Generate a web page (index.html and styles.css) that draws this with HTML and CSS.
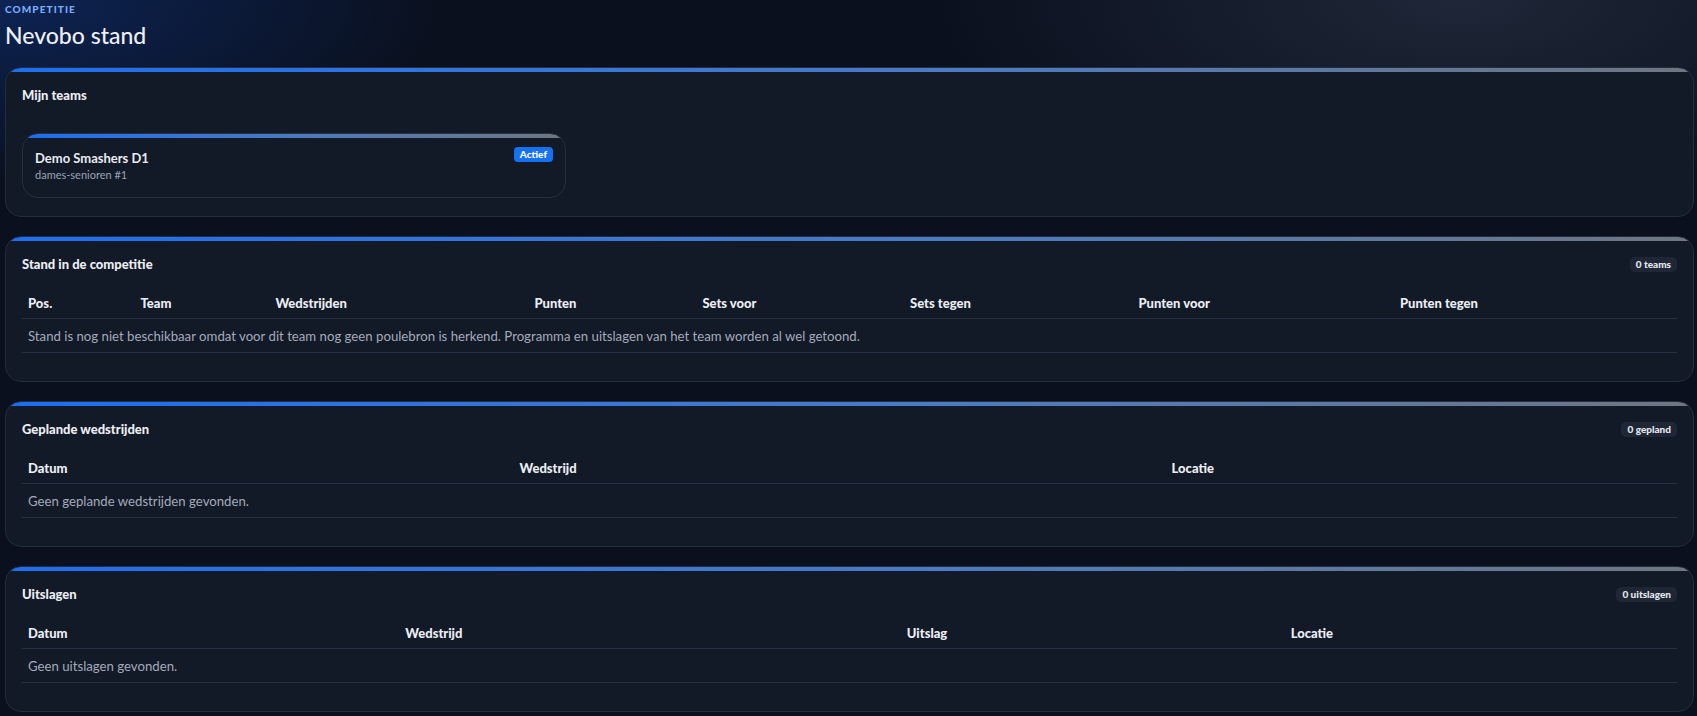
FILE: index.html
```html
<!DOCTYPE html>
<html lang="nl">
<head>
<meta charset="utf-8">
<title>Nevobo stand</title>
<link rel="stylesheet" href="styles.css">
</head>
<body>
<main class="page">
  <header class="page-head">
    <div class="eyebrow">COMPETITIE</div>
    <h1 class="page-title">Nevobo stand</h1>
  </header>

  <section class="card">
    <div class="card-head">
      <h2 class="card-title">Mijn teams</h2>
    </div>
    <div class="teams">
      <div class="team">
        <div class="team-row">
          <div class="team-name">Demo Smashers D1</div>
          <span class="pill pill-active">Actief</span>
        </div>
        <div class="team-sub">dames-senioren #1</div>
      </div>
    </div>
  </section>

  <section class="card">
    <div class="card-head">
      <h2 class="card-title">Stand in de competitie</h2>
      <span class="pill pill-count">0 teams</span>
    </div>
    <div class="table-wrap">
      <table class="grid">
        <colgroup>
          <col class="c-pos"><col class="c-team"><col class="c-played"><col class="c-points">
          <col class="c-sets-for"><col class="c-sets-against"><col class="c-pts-for"><col class="c-pts-against">
        </colgroup>
        <thead>
          <tr><th>Pos.</th><th>Team</th><th>Wedstrijden</th><th>Punten</th><th>Sets voor</th><th>Sets tegen</th><th>Punten voor</th><th>Punten tegen</th></tr>
        </thead>
        <tbody>
          <tr><td colspan="8" class="empty">Stand is nog niet beschikbaar omdat voor dit team nog geen poulebron is herkend. Programma en uitslagen van het team worden al wel getoond.</td></tr>
        </tbody>
      </table>
    </div>
  </section>

  <section class="card">
    <div class="card-head">
      <h2 class="card-title">Geplande wedstrijden</h2>
      <span class="pill pill-count">0 gepland</span>
    </div>
    <div class="table-wrap">
      <table class="grid">
        <colgroup>
          <col class="c-p-date"><col class="c-p-match"><col class="c-p-loc">
        </colgroup>
        <thead>
          <tr><th>Datum</th><th>Wedstrijd</th><th>Locatie</th></tr>
        </thead>
        <tbody>
          <tr><td colspan="3" class="empty">Geen geplande wedstrijden gevonden.</td></tr>
        </tbody>
      </table>
    </div>
  </section>

  <section class="card">
    <div class="card-head">
      <h2 class="card-title">Uitslagen</h2>
      <span class="pill pill-count">0 uitslagen</span>
    </div>
    <div class="table-wrap">
      <table class="grid">
        <colgroup>
          <col class="c-r-date"><col class="c-r-match"><col class="c-r-score"><col class="c-r-loc">
        </colgroup>
        <thead>
          <tr><th>Datum</th><th>Wedstrijd</th><th>Uitslag</th><th>Locatie</th></tr>
        </thead>
        <tbody>
          <tr><td colspan="4" class="empty">Geen uitslagen gevonden.</td></tr>
        </tbody>
      </table>
    </div>
  </section>
</main>
</body>
</html>
```

FILE: styles.css
```css
* { box-sizing: border-box; }

html, body {
  margin: 0;
  height: 100%;
}

body {
  font-family: Lato, "Noto Sans", "Liberation Sans", sans-serif;
  color: #e6e9ef;
  background:
    radial-gradient(ellipse 640px 260px at 0 0, rgba(16, 60, 150, 0.45), rgba(16, 60, 150, 0) 70%),
    radial-gradient(ellipse 760px 300px at 1460px 0, rgba(70, 82, 104, 0.35), rgba(70, 82, 104, 0) 70%),
    #0a101e;
  overflow: hidden;
}

.page {
  display: flex;
  flex-direction: column;
  gap: 19px;
  padding: 3px 3px 0 5px;
}

/* page heading */
.page-head {
  display: flex;
  flex-direction: column;
  margin-bottom: -1px;
}

.eyebrow {
  font-size: 10px;
  line-height: 12px;
  font-weight: 900;
  letter-spacing: 1.1px;
  color: #79adff;
}

.page-title {
  margin: 6px 0 0;
  font-size: 23px;
  line-height: 28px;
  font-weight: 500;
  color: #eef0f5;
}

/* cards with a gradient strip along the top */
.card {
  border: 1px solid #232d3e;
  border-radius: 16px;
  background:
    linear-gradient(90deg, #1c6ef2 0%, #4a7bc4 55%, #6f7681 100%) top left / 100% 4px no-repeat,
    #121927;
  padding: 17px 16px 18px;
}

.card-head {
  display: flex;
  align-items: center;
  justify-content: space-between;
  min-height: 20px;
}

.card-title {
  margin: 0;
  font-size: 13px;
  line-height: 20px;
  font-weight: 900;
  color: #eceef3;
}

.pill {
  display: inline-flex;
  align-items: center;
  height: 15px;
  padding: 0 6px;
  border-radius: 5px;
  font-size: 10px;
  font-weight: 900;
  line-height: 15px;
}

.pill-active {
  background: #1672f5;
  color: #ffffff;
  border-radius: 4px;
}

.pill-count {
  background: #1f2736;
  color: #e4e7ee;
}

/* team tiles */
.teams {
  display: grid;
  grid-template-columns: 544px;
  margin-top: 28px;
}

.team {
  border: 1px solid #243043;
  border-radius: 16px;
  background:
    linear-gradient(90deg, #1c6ef2 0%, #4f7ab8 55%, #6f7681 100%) top left / 100% 4px no-repeat,
    #121927;
  padding: 14px 12px 15px 12px;
}

.team-row {
  display: flex;
  align-items: flex-start;
  justify-content: space-between;
}

.team-name {
  font-size: 13px;
  line-height: 20px;
  font-weight: 700;
  color: #e8ebf1;
}

.team-row .pill { margin-top: -1px; }

.team-sub {
  font-size: 11px;
  line-height: 14px;
  color: #9aa3b3;
}

/* tables */
.table-wrap {
  margin-top: 14px;
  padding-bottom: 10px;
}

.grid {
  width: 100%;
  border-collapse: collapse;
  table-layout: fixed;
}

.grid th {
  text-align: left;
  font-size: 13px;
  line-height: 18px;
  font-weight: 900;
  color: #eceef3;
  padding: 6px 6px 6px;
  border-bottom: 1px solid #263044;
}

.grid td {
  font-size: 13.2px;
  line-height: 18px;
  color: #a3abba;
  padding: 8px 6px 7px;
  border-bottom: 1px solid #263044;
}

.c-pos { width: 6.8%; }
.c-team { width: 8.15%; }
.c-played { width: 15.65%; }
.c-points { width: 10.15%; }
.c-sets-for { width: 12.55%; }
.c-sets-against { width: 13.8%; }
.c-pts-for { width: 15.8%; }
.c-pts-against { width: 17.1%; }

.c-p-date { width: 29.7%; }
.c-p-match { width: 39.4%; }
.c-p-loc { width: 30.9%; }

.c-r-date { width: 22.8%; }
.c-r-match { width: 30.3%; }
.c-r-score { width: 23.2%; }
.c-r-loc { width: 23.7%; }
```
